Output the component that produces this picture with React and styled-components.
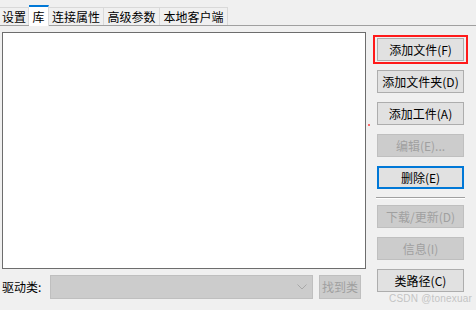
import React from "react";
import styled, { createGlobalStyle } from "styled-components";

const Global = createGlobalStyle`
  html, body { margin: 0; padding: 0; background: #f0f0f0; }
  body { font-family: "Noto Sans CJK SC", "Noto Sans", sans-serif; font-size: 12px; color: #000; }
`;

const Page = styled.div`
  position: relative;
  width: 476px;
  height: 310px;
  background: #f0f0f0;
  overflow: hidden;
`;

const TabStrip = styled.div`
  display: flex;
  align-items: flex-end;
  height: 26px;
  box-sizing: border-box;
  border-bottom: 1px solid #a0a0a0;
`;

const Tab = styled.div`
  box-sizing: border-box;
  display: flex;
  align-items: center;
  justify-content: center;
  width: ${(p) => p.$w}px;
  height: ${(p) => (p.$active ? 21 : 18)}px;
  margin-bottom: ${(p) => (p.$active ? -1 : 0)}px;
  background: ${(p) => (p.$active ? "#ffffff" : "#f0f0f0")};
  border: 1px solid #d9d9d9;
  border-bottom: none;
  border-top: ${(p) => (p.$active ? "2px solid #0078d7" : "1px solid #d9d9d9")};
  margin-left: ${(p) => (p.$first ? -1 : 0)}px;
  font-size: 12px;
  line-height: 16px;
  padding-top: ${(p) => (p.$active ? 0 : 1)}px;
  white-space: nowrap;
  & + & { border-left: ${(p) => (p.$active ? "1px solid #d9d9d9" : "none")}; }
`;

const Body = styled.div`
  display: flex;
  padding: 6px 0 0 2px;
`;

const LeftCol = styled.div`
  display: flex;
  flex-direction: column;
  gap: 6px;
  width: 364px;
`;

const ListBox = styled.div`
  box-sizing: border-box;
  height: 237px;
  background: #ffffff;
  border: 1px solid #6d6d6d;
`;

const BottomRow = styled.div`
  display: flex;
  align-items: center;
  height: 24px;
`;

const Label = styled.span`
  width: 48px;
  font-size: 12px;
  line-height: 16px;
`;

const Combo = styled.div`
  box-sizing: border-box;
  width: 263px;
  height: 24px;
  background: #cccccc;
  border: 1px solid #bfbfbf;
  display: flex;
  align-items: center;
  justify-content: flex-end;
  padding-right: 5px;
  margin-right: 6px;
`;

const RightCol = styled.div`
  display: flex;
  flex-direction: column;
  gap: 9px;
  width: 87px;
  margin-left: 11px;
  padding-top: 6px;
`;

const Button = styled.div`
  position: relative;
  box-sizing: border-box;
  width: ${(p) => p.$w || 87}px;
  height: ${(p) => p.$h || 23}px;
  display: flex;
  align-items: center;
  justify-content: center;
  font-size: 12px;
  line-height: 16px;
  white-space: nowrap;
  background: ${(p) => (p.$disabled ? "#cccccc" : "#e1e1e1")};
  color: ${(p) => (p.$disabled ? "#a0a0a0" : "#000000")};
  border: ${(p) =>
    p.$focused ? "2px solid #0078d7" : p.$disabled ? "1px solid #bfbfbf" : "1px solid #adadad"};
`;

const Highlight = styled.span`
  position: absolute;
  top: -4px;
  bottom: -4px;
  left: -5px;
  right: -5px;
  border: 2px solid #ff1a1a;
  pointer-events: none;
`;

const Separator = styled.div`
  height: 0;
  border-top: 1px solid #a0a0a0;
  border-bottom: 1px solid #ffffff;
  margin: -1px -1px -3px -1px;
`;

const Dot = styled.span`
  position: absolute;
  left: 368px;
  top: 124px;
  width: 2px;
  height: 2px;
  background: #ff4040;
  border-radius: 1px;
`;

const Watermark = styled.span`
  position: absolute;
  right: 4px;
  bottom: 6px;
  font-family: "Liberation Sans", Arial, sans-serif;
  font-size: 10px;
  line-height: 11px;
  color: #c4c4c4;
  letter-spacing: 0.2px;
`;

const Chevron = () => (
  <svg width="10" height="6" viewBox="0 0 10 6">
    <path d="M0.5 0.5 L5 5 L9.5 0.5" fill="none" stroke="#a8a8a8" strokeWidth="1" />
  </svg>
);

export default function App() {
  return (
    <Page>
      <Global />
      <TabStrip>
        <Tab $w={30} $first>设置</Tab>
        <Tab $w={20} $active>库</Tab>
        <Tab $w={55}>连接属性</Tab>
        <Tab $w={56}>高级参数</Tab>
        <Tab $w={68}>本地客户端</Tab>
      </TabStrip>
      <Body>
        <LeftCol>
          <ListBox />
          <BottomRow>
            <Label>驱动类:</Label>
            <Combo>
              <Chevron />
            </Combo>
            <Button $w={42} $h={24} $disabled>找到类</Button>
          </BottomRow>
        </LeftCol>
        <RightCol>
          <Button>
            添加文件(F)
            <Highlight />
          </Button>
          <Button>添加文件夹(D)</Button>
          <Button>添加工件(A)</Button>
          <Button $disabled>编辑(E)...</Button>
          <Button $focused>删除(E)</Button>
          <Separator />
          <Button $disabled>下载/更新(D)</Button>
          <Button $disabled>信息(I)</Button>
          <Button>类路径(C)</Button>
        </RightCol>
      </Body>
      <Dot />
      <Watermark>CSDN @tonexuar</Watermark>
    </Page>
  );
}
